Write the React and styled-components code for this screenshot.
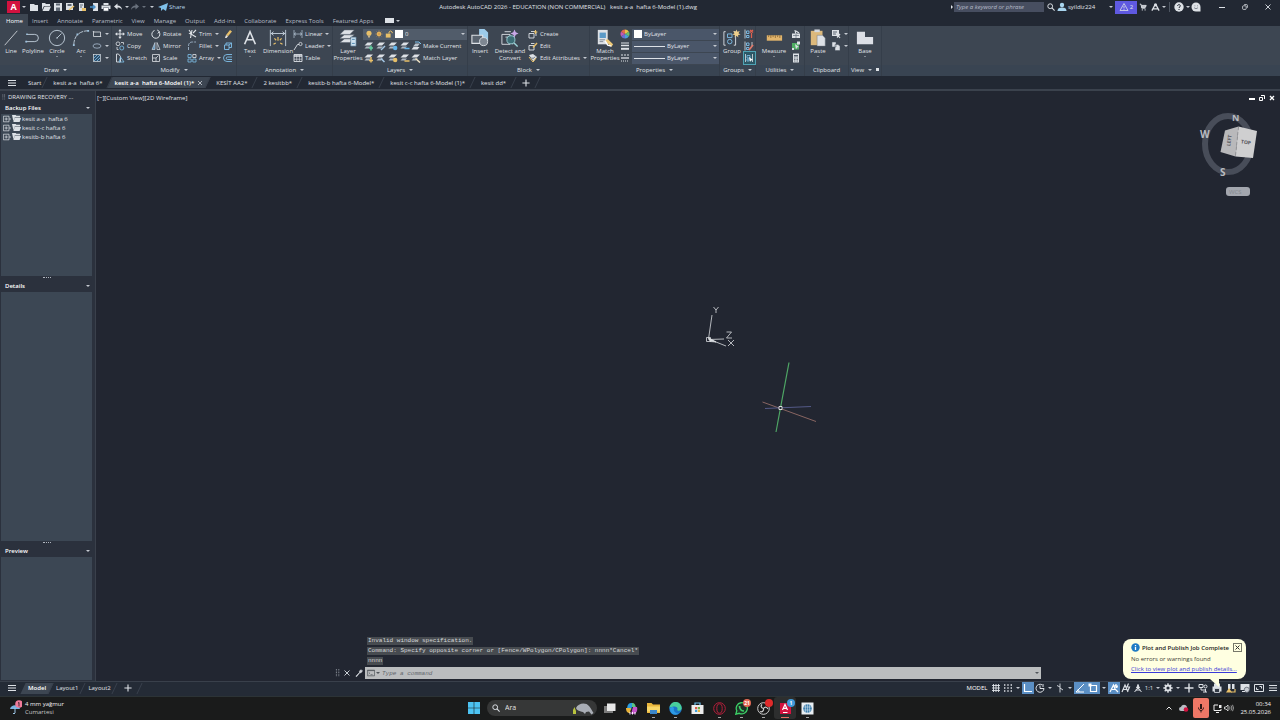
import React from "react";
import styled, { createGlobalStyle } from "styled-components";

const colors = {
  frame: "#222833",
  ribbon: "#3d4652",
  ribbonTitle: "#394452",
  canvas: "#222631",
  palette: "#3c4754",
  paletteHead: "#2b313d",
  line: "#3b424d",
  text: "#e0e4e9",
  dim: "#b9bfc8",
  accent: "#5b8fc4"
};

const GlobalStyle = createGlobalStyle`
  * { box-sizing: border-box; }
  body {
    margin: 0;
    background: ${colors.canvas};
    color: ${colors.text};
    font: 6px/8px "Open Sans", "Noto Sans", sans-serif;
  }
  button, input, select {
    font: inherit;
    color: inherit;
    background: none;
    border: 0;
    padding: 0;
    margin: 0;
  }
  a { color: inherit; text-decoration: none; }
  ul { list-style: none; margin: 0; padding: 0; }
  svg { display: block; flex: none; }
`;

/* ---------- icons ---------- */

const W = "#dde1e6";
const B = "#7fc0ea";
const Y = "#e8c069";

// two sheets of a layer stack with a coloured mark over the lower right corner
const stack = (mark, shape) => (
  <>
    <path d="M.5 4.500L3.500 1.500H9L6 4.500z" fill={W} />
    <path d="M.5 7.500l1.800-2H7L5 7.500z" fill="#aeb6bf" />
    {shape ? (
      <path d={shape} stroke={mark} strokeWidth="1.500" fill="none" />
    ) : (
      <circle cx="7.200" cy="7" r="2.200" fill={mark} />
    )}
  </>
);

const small = {
  launch: <path d="M0 0h10v10H0z" fill={W} />,
  newFile: <path d="M1 2h4l1 1h3v6H1z" fill={W} />,
  open: <path d="M1 1h3l1 1h4v2H3L1 8zM3.500 4.500H10L8 9H1.500z" fill={W} />,
  save: (
    <>
      <path d="M1 1h8v8H1z" fill={W} />
      <path d="M3 1.500h4v2H3zM3 5.500h4V9H3z" fill="#5f6874" />
    </>
  ),
  saveAs: (
    <>
      <path d="M1 1h7v7H1z" fill={W} />
      <path d="M2.500 2h4v2h-4z" fill="#5f6874" />
      <path d="M4 8l5-4" stroke={Y} strokeWidth="1.600" />
    </>
  ),
  exportFile: (
    <>
      <path d="M2 1h5v8H2z" fill={W} />
      <path d="M5 6h4v3H5z" fill={Y} />
      <path d="M3 3h3M3 5h2" stroke="#5f6874" />
    </>
  ),
  mobile: (
    <>
      <path d="M4 1h5v8H4z" fill={W} />
      <path d="M1 5h5M4 3l2 2-2 2" stroke="#4a90c8" strokeWidth="1.400" fill="none" />
    </>
  ),
  print: (
    <>
      <path d="M2.500 1h5v2h-5zM.5 3.500h9V7h-9z" fill={W} />
      <path d="M2.500 5.500h5V9h-5z" fill="#fff" stroke="#59626e" strokeWidth=".6" />
    </>
  ),
  undo: <path d="M1 4.500L4.500 1.500v2C7 3.500 9 5 9 8 8 6 6.500 5.500 4.500 5.500v2z" fill={W} />,
  redo: <path d="M9 4.500L5.500 1.500v2C3 3.500 1 5 1 8c1-2 2.500-2.500 4.500-2.500v2z" fill="#69717d" />,
  plane: <path d="M0 5l10-4-2 8-3-2-2 2V6z" fill={B} />,
  search: (
    <>
      <circle cx="4" cy="4" r="3" fill="none" stroke={W} strokeWidth="1.200" />
      <path d="M6.200 6.200L9.500 9.500" stroke={W} strokeWidth="1.400" />
    </>
  ),
  user: (
    <>
      <circle cx="5" cy="3" r="2.200" fill="#a9d5ef" />
      <path d="M.5 9c0-3 2.500-3.500 4.500-3.500S9.500 6 9.500 9z" fill="#a9d5ef" />
    </>
  ),
  warn: <path d="M5 1.500l4 7H1zM5 4v2.400M5 7v.8" fill="none" stroke={W} strokeWidth=".8" />,
  cart: (
    <>
      <path d="M1 1.500h1.500l1 5H8M3 3h6L8 5.500H3.500M3.500 4.200h5" fill="none" stroke={W} strokeWidth="1.200" />
      <path d="M3.500 8.500h1.200M7 8.500h1.200" stroke={W} strokeWidth="1.500" />
    </>
  ),
  autodesk: (
    <>
      <path d="M5 1l4 7.500M5 1L1 8.500M2.500 6.500h5" fill="none" stroke={W} strokeWidth="1.400" />
      <circle cx="5" cy="2.200" r="1.600" fill={W} />
    </>
  ),
  help: (
    <>
      <circle cx="5" cy="5" r="4.700" fill={W} />
      <path d="M3.600 4c0-2 3-1.700 2.700 0C6.200 5 5 4.900 5 6M5 7v1" fill="none" stroke={colors.frame} />
    </>
  ),
  chat: (
    <>
      <path d="M5 .5a4.400 4.400 0 1 0 0 9h4.500V5A4.500 4.500 0 0 0 5 .5z" fill={W} />
      <path d="M3 5.500c1 1.500 3 1.500 4 0M3.500 3.800h.8M6 3.800h.8" fill="none" stroke="#6d7580" strokeWidth=".8" />
    </>
  ),
  minus: <path d="M2 5.500h6" stroke={W} />,
  restore: (
    <>
      <rect x="2" y="3.500" width="4.500" height="4.500" rx="1" fill="none" stroke={W} />
      <path d="M4 2h3q1 0 1 1v3" fill="none" stroke={W} />
    </>
  ),
  close: <path d="M2.500 2.500l5 5M7.500 2.500l-5 5" stroke={W} strokeWidth=".9" />,
  menu: <path d="M1 2.500h8M1 5h8M1 7.500h8" stroke={W} strokeWidth="1.200" />,
  plus: <path d="M5 .5v9M.5 5h9" stroke={W} strokeWidth="1.400" />,

  rect: <path d="M1.500 3h7v4.500h-7zM.8 2.500h1.400M7.800 7.500h1.400" fill="none" stroke={W} strokeWidth=".8" />,
  ellipse: <ellipse cx="5" cy="5" rx="4" ry="2.200" fill="none" stroke="#a9bbcf" strokeWidth=".8" />,
  hatch: (
    <>
      <rect x="1.500" y="1.500" width="7" height="7" fill="#2f4e6b" stroke={W} strokeWidth=".7" />
      <path d="M2 8l6-6M2 5l3-3M5 8l3-3" stroke={B} strokeWidth=".8" />
    </>
  ),
  move: (
    <>
      <path d="M5 1v8M1 5h8" stroke={W} />
      <path d="M5 0l1.700 2.200H3.300zM5 10L3.300 7.800h3.400zM0 5l2.200-1.700v3.400zM10 5L7.800 6.700V3.300z" fill={W} />
    </>
  ),
  copy: (
    <>
      <circle cx="3" cy="2.800" r="1.900" fill="none" stroke={W} strokeWidth=".8" />
      <circle cx="6.800" cy="7" r="2" fill="none" stroke={B} strokeWidth=".8" />
      <path d="M2 6v2.500h1.500M6 1.500h2.500v2" fill="none" stroke={W} strokeWidth=".8" />
    </>
  ),
  stretch: (
    <>
      <path d="M1.500 1v8h4V3.500L3.500 1z" fill="none" stroke={W} strokeWidth=".9" />
      <path d="M4 9h5L5.500 4z" fill="none" stroke={B} strokeWidth=".8" />
    </>
  ),
  rotate: <path d="M3.500 1.500A4 4 0 1 0 8 2.800M6.200 1l2.200 1.500L6.800 4.500" fill="none" stroke={W} />,
  mirror: (
    <>
      <path d="M4 1.500V8.500H1z" fill="#5a8fb9" stroke={W} strokeWidth=".6" />
      <path d="M6 1.500V8.500h3z" fill="none" stroke={W} strokeWidth=".7" />
    </>
  ),
  scale: <path d="M1.500 1.500h7v7h-7zM1.500 5h3.500v3.500M5 5l2.500-2.500" fill="none" stroke={W} strokeWidth=".8" />,
  trim: (
    <>
      <path d="M2 1l3.500 5M5 1L3.500 9M6 4l3-3M5.500 6L9 8" stroke={W} strokeWidth="1.100" fill="none" />
      <path d="M1.500 4.500l3-1.500v3z" fill={W} />
    </>
  ),
  fillet: <path d="M1.500 9V5q0-4 4-4H9" fill="none" stroke="#9fb4c9" strokeWidth=".9" strokeDasharray="3 1" />,
  array: (
    <>
      <path d="M1 1.500h3.200v3H1zM1 6h3.200v3H1zM5.800 6H9v3H5.800z" fill="none" stroke={B} strokeWidth=".8" />
      <path d="M5.800 1.500H9v3H5.800z" fill="none" stroke={W} strokeWidth=".8" />
    </>
  ),
  erase: (
    <>
      <path d="M3 6l4-5 2 1.500-4 4.800z" fill={Y} />
      <path d="M3 6l2 1.300L3.500 9H2z" fill="#e9e5de" />
    </>
  ),
  explode: <path d="M1.500 4h4.500v4.500H1.500zM3 4V2h5.500v4.500H6M6 4l2.500-2" fill="none" stroke={B} strokeWidth=".9" />,
  offset: <path d="M9 1.500H4a3.300 3.300 0 0 0 0 7h5M9 4H4.500a1.200 1.200 0 0 0 0 2.500H9" fill="none" stroke={B} strokeWidth=".9" />,
  linear: <path d="M1 1v8M9 1v8M1 5h8M3 3.500L1.300 5 3 6.500M7 3.500L8.700 5 7 6.500" fill="none" stroke="#b9c9d8" strokeWidth=".7" />,
  leader: (
    <>
      <path d="M1 9l3.500-5.500H6" fill="none" stroke={W} strokeWidth=".9" />
      <circle cx="7.500" cy="3" r="1.600" fill="none" stroke={W} strokeWidth=".8" />
    </>
  ),
  table: (
    <>
      <path d="M1 1.500h8v7H1z" fill="none" stroke={W} strokeWidth=".9" />
      <path d="M1 3h8" stroke={W} strokeWidth="1.500" />
      <path d="M1 6.200h8M3.700 2v6M6.400 2v6" stroke={W} strokeWidth=".6" />
    </>
  ),
  bulb: (
    <>
      <circle cx="5" cy="4" r="3.200" fill={Y} />
      <path d="M3.800 7h2.400v2.500H3.800z" fill="#c9b68c" />
    </>
  ),
  sun: (
    <>
      <circle cx="5" cy="5" r="2.800" fill={Y} />
      <path d="M5 .5v9M.5 5h9M2 2l6 6M8 2L2 8" stroke="#d69a4c" strokeWidth=".8" />
    </>
  ),
  lock: (
    <>
      <path d="M5 4.500V2.500q2-2.500 4 0V4" fill="none" stroke={Y} strokeWidth="1.200" />
      <path d="M1 4.500h6v5H1z" fill={Y} />
    </>
  ),
  layOff: stack("#62d0a0", "M7 4.500v5M5 7h4"),
  layIso: stack("#a4c7e5", "M5 9l4-4"),
  layFreeze: stack("#63b4ea"),
  layLock: stack("#63b4ea", "M4.500 7.500h5"),
  layCurrent: (
    <>
      <path d="M.5 8.500l2-2.500h6l-2 2.500z" fill={W} />
      <path d="M2 5.500L4.500 2.500H9L6.500 5.500z" fill="#b9c2cb" />
      <path d="M4 1h4l2 2" stroke={B} fill="none" />
    </>
  ),
  layOn: stack("#e8c069", "M7 4v5.500M5 7.500h4"),
  layUniso: stack("#a4c7e5", "M5 5.500L8.500 9"),
  layThaw: stack("#e8c069"),
  layUnlock: stack("#e8c069", "M4.500 8h5"),
  layMatch: stack("#efe3c4", "M4.500 5.500l4.500 4"),
  create: (
    <>
      <path d="M1 4.500h5v4.500H1zM3 2.500h5v4.500" fill="none" stroke={W} strokeWidth=".9" />
      <path d="M7.500 1v4M5.800 3h3.600" stroke={Y} strokeWidth="1.100" />
    </>
  ),
  edit: (
    <>
      <path d="M1 4.500h5v4.500H1zM3 2.500h3.500" fill="none" stroke={W} strokeWidth=".9" />
      <path d="M5 6.500L9 2" stroke={Y} strokeWidth="1.500" />
    </>
  ),
  editAttr: (
    <>
      <path d="M1 2l4-1 4 3-3.500 4.500z" fill={W} />
      <path d="M1 4l4 5 3-4" stroke={Y} fill="none" />
      <path d="M4 4.500l1 1.200 2-2" stroke="#444d59" fill="none" strokeWidth=".8" />
    </>
  ),
  wheel: (
    <>
      <path d="M5 5V.5A4.500 4.500 0 0 1 8.900 2.800z" fill="#e9c34b" />
      <path d="M5 5l3.900-2.200a4.500 4.500 0 0 1 0 4.400z" fill="#6abf69" />
      <path d="M5 5l3.900 2.200A4.500 4.500 0 0 1 5 9.500z" fill="#4aa3d8" />
      <path d="M5 5v4.500A4.500 4.500 0 0 1 1.100 7.200z" fill="#6b6fd0" />
      <path d="M5 5L1.100 7.200a4.500 4.500 0 0 1 0-4.400z" fill="#c45ab3" />
      <path d="M5 5L1.100 2.800A4.500 4.500 0 0 1 5 .5z" fill="#e2694f" />
    </>
  ),
  weight: (
    <>
      <path d="M1 2h8" stroke={W} />
      <path d="M1 4.500h8" stroke={W} strokeWidth="1.500" />
      <path d="M1 7.800h8" stroke={W} strokeWidth="2" />
    </>
  ),
  ltype: (
    <>
      <path d="M1 2h8" stroke={W} strokeDasharray="2 1" />
      <path d="M1 5h8" stroke={W} strokeWidth="1.300" />
      <path d="M1 8h8" stroke={W} strokeDasharray="1 1" />
    </>
  ),
  ungroup: (
    <>
      <path d="M2.500 2h2.500v2.500H2.500zM2.500 6.500H5V8.500H2.500z" fill="none" stroke={B} strokeWidth=".9" />
      <path d="M1 .5v9" stroke={W} strokeWidth=".8" />
      <path d="M6 3.500l3-2.500M6 1l3 2.500M7.500 4v5" stroke="#e0604f" strokeWidth="1.200" />
    </>
  ),
  groupEdit: (
    <>
      <path d="M2.500 2h2.500v2.500H2.500zM2.500 6.500H5V8.500H2.500z" fill="none" stroke={B} strokeWidth=".9" />
      <path d="M1 .5v9M8 1v4" stroke={W} strokeWidth=".8" />
      <path d="M5 9l4-5" stroke="#e0796a" strokeWidth="1.700" />
    </>
  ),
  groupSel: (
    <>
      <path d="M3 2.500h3v2.500H3zM3 6h2v2H3z" fill="none" stroke={B} strokeWidth=".8" />
      <path d="M1.500 1v8M8.500 1v8" stroke={W} strokeWidth=".8" />
      <path d="M5 4l4 3-2 .4L6 9z" fill="#fff" />
    </>
  ),
  quickSel: (
    <>
      <path d="M1 4.500h8V9H1z" fill={W} />
      <path d="M4 1l1 5M5 2l3 2" stroke={W} strokeWidth="1.200" />
      <path d="M5 4.500V9M2 6.500h6" stroke="#66707c" strokeWidth=".7" />
    </>
  ),
  selAll: (
    <>
      <path d="M1 2h7v6.500H1z" fill="#4fae63" />
      <path d="M6 .5h3v3H6zM1 7h2v2H1z" fill={W} />
      <path d="M4 3l4 3-2 .5L5 8.500z" fill={W} />
    </>
  ),
  calc: (
    <>
      <path d="M2 .5h6v9H2z" fill={W} />
      <path d="M3 2h4v1.500H3z" fill="#555f6b" />
      <path d="M3 5h4M3 6.500h4M3 8h4" stroke="#555f6b" strokeWidth=".8" strokeDasharray="1 .5" />
    </>
  ),
  copyClip: (
    <>
      <path d="M1 1h7v6H1z" fill={W} />
      <path d="M2 3h4M2 5h3" stroke="#59636f" />
      <path d="M5 4l4 5M9 5L6 8.500" stroke={W} strokeWidth="1.200" />
    </>
  ),
  pages: <path d="M1 1h4v5H1zM4 3.500h3L9 5v4.500H4z" fill={W} stroke="#4b5561" strokeWidth=".5" />,
  folder: <path d="M0 1h4l1 1h4v2H3L1.500 8zM3 4.500h7L8.500 9H1.500z" fill={W} />,
  expand: <path d="M.5 1.500h7v7h-7zM2 5h4M4 3v4M7.500 5H10" fill="none" stroke={W} strokeWidth=".9" />,
  wrench: <path d="M1 9l4.500-4.500C5 2.500 6.500.8 8.500 1.200L7 2.700 7.500 3.200 9 1.700c.5 2-1.300 3.500-3 3.100L2 9.600z" fill={W} stroke={W} strokeWidth=".6" />,
  grip: <path d="M3 0v10M6 0v10" stroke="#b4bac3" strokeDasharray="1 1" />,
  prompt: (
    <>
      <path d="M.5 1.500h9v7h-9z" fill="none" stroke="#50555b" strokeWidth=".9" />
      <path d="M.5 2h9" stroke="#50555b" />
      <path d="M2 4l1.500 1.200L2 6.500M4.500 7H7" fill="none" stroke="#50555b" strokeWidth=".8" />
    </>
  ),

  grid: <path d="M2.500 1v8M5 1v8M7.500 1v8M1 2.500h8M1 5h8M1 7.500h8" stroke={W} strokeWidth=".9" />,
  snap: <path d="M1 2h8M1 5h8M1 8h8" stroke={W} strokeWidth="1.400" strokeDasharray="1.400 1.900" />,
  ortho: <path d="M1.500 1v7.500H9" fill="none" stroke="#fff" strokeWidth="1.200" />,
  polar: (
    <>
      <path d="M7 1.800A4 4 0 1 0 9 5.500H5V2.500" fill="none" stroke={W} />
      <path d="M8 1v3" stroke={W} />
    </>
  ),
  iso: <path d="M5 .5v9M5 5l3 2M5 4L2 2.500" stroke={W} strokeWidth=".9" />,
  track: <path d="M1 9L9 1M1 9h8M4 9a3 3 0 0 0-1-2.500" fill="none" stroke="#fff" />,
  osnap: (
    <>
      <path d="M2.500 2.500h6v6h-6z" fill="none" stroke="#fff" strokeWidth="1.200" />
      <path d="M.5.5h3v3h-3z" fill="#fff" />
    </>
  ),
  annoOn: <path d="M1 9l3.500-7L6 6l3 3M3 6.500h3M7 1v4M5 3h4M6 2l2.500 2.500" fill="none" stroke="#fff" strokeWidth="1.200" />,
  annoAuto: <path d="M1 9l3-7 3 7M2.500 6.500h3M7.500.5L6 4h2.500L7 7.500" fill="none" stroke={W} strokeWidth="1.200" />,
  annoScale: <path d="M5 1v4M5 5L1.500 9M5 5l3.500 4M2.500 7h5M5 2l1.500 3h-3z" fill={W} stroke={W} />,
  gear: (
    <>
      <circle cx="5" cy="5" r="2.500" fill="none" stroke={W} strokeWidth="1.800" />
      <path d="M5 .3v2M5 7.700v2M.3 5h2M7.700 5h2M1.700 1.700l1.300 1.300M7 7l1.300 1.300M8.300 1.700L7 3M3 7L1.700 8.300" stroke={W} strokeWidth="1.400" />
    </>
  ),
  isolate: (
    <>
      <path d="M1 1.500h4v3H1z" fill="none" stroke={W} />
      <circle cx="7.500" cy="3.500" r="1.500" fill="none" stroke={W} />
      <path d="M3 5v2h4M7.500 6v3M5 9h4" fill="none" stroke={W} />
    </>
  ),
  plotter: (
    <>
      <path d="M2 .5h6v3H2zM.5 3.500h9v5h-9z" fill={W} />
      <path d="M2.500 5.500h5V9.500h-5z" fill="#333a45" stroke={W} strokeWidth=".8" />
    </>
  ),
  perf: (
    <>
      <path d="M2 1v5h2.500V1zM6 1v5h2.500V1z" fill={W} />
      <path d="M0 9.500L3 5l3 4.500z" fill={Y} />
      <path d="M5 9h4V6" stroke={Y} fill="none" strokeWidth="1.200" />
    </>
  ),
  hardware: (
    <>
      <path d="M.5 1h9v6h-9z" fill={W} />
      <circle cx="6.800" cy="6.800" r="2.600" fill="#c9ced5" stroke="#3b424d" strokeWidth=".6" />
      <path d="M2 8.500h3" stroke={W} />
    </>
  ),
  clean: <path d="M.5 1.500h9v7h-9zM5.500 3.500h2v2M2.500 4.500v2h2" fill="none" stroke={W} />
};

const large = {
  line: <path d="M3 18L17 2" stroke={W} strokeWidth=".9" />,
  polyline: (
    <>
      <path d="M3 6h9a3.800 3.800 0 0 1 0 8H2" fill="none" stroke="#c3d0dd" />
      <path d="M1.500 13h2v2h-2zM2.500 5h1.600v1.600H2.500z" fill="#9ec3e0" />
    </>
  ),
  circle: (
    <>
      <circle cx="10" cy="10" r="8.500" fill="none" stroke="#c3d0dd" />
      <path d="M10 10l5-5M9 10h2" stroke="#c3d0dd" />
    </>
  ),
  arc: (
    <>
      <path d="M2 18C2 8 8 2 18 2" fill="none" stroke="#c3d0dd" strokeDasharray="6 1" />
      <path d="M1 17h2v2H1zM5 5h2v2H5zM17 1h2v2h-2z" fill="#9ec3e0" />
    </>
  ),
  text: <path d="M4 17L10 3l6 14M6.200 12h7.600" fill="none" stroke={W} strokeWidth="1.800" />,
  dimension: (
    <>
      <path d="M1.500 1v18M18.500 1v18M2 5h16M5 3L2.500 5 5 7M15 3l2.500 2L15 7" fill="none" stroke="#c6d2de" />
      <path d="M5 17l2.500-1.500M15 17l-2.500-1.500M10 9v4M6 10.500l2 2M14 10.500l-2 2" stroke={Y} strokeWidth="1.300" />
    </>
  ),
  layers: (
    <>
      <path d="M1 6l5-5h11l-5 5zM1 10.500l5-4h11l-5 4zM1 15l5-4h11l-5 4z" fill={W} stroke="#59636f" strokeWidth=".6" />
      <path d="M13 9h6v10h-6z" fill="#cfe2f0" stroke="#4b6f8c" strokeWidth=".7" />
      <path d="M14.500 11.500h3M14.500 16h3" stroke="#3f7eaa" />
    </>
  ),
  insert: (
    <>
      <path d="M9 0h6l4 4v9H9z" fill="#9ccbea" />
      <path d="M1 7h12v9H1z" fill="#59636f" stroke={W} strokeWidth="1.200" />
      <circle cx="14" cy="14" r="4.500" fill="#7e8792" stroke={W} />
    </>
  ),
  detect: (
    <>
      <path d="M1 6h9v11H1zM4 3h7M5 9h8v8" fill="none" stroke={W} />
      <circle cx="11" cy="12" r="4.500" fill="#3d6d76" stroke="#9cd3d8" />
      <path d="M14.500 15.500l4 4" stroke="#9cd3d8" strokeWidth="1.500" />
      <path d="M15 .5l1.400 3.100L19.500 5l-3.100 1.400L15 9.500l-1.400-3.100L10.500 5l3.100-1.400z" fill="#c9a8e8" />
    </>
  ),
  match: (
    <>
      <path d="M2 1h11v16H2z" fill={W} />
      <path d="M4 4h7v6H4z" fill="#5a9ac8" />
      <path d="M4 12h6M4 14h4" stroke="#7d8691" />
      <path d="M10 13l3-2 6 6-2 3z" fill="#edc978" />
      <path d="M10 13l3 5 4 1" stroke="#fff" strokeWidth="1.500" fill="none" />
    </>
  ),
  group: (
    <>
      <path d="M3 3H1v15h2M12 3h2v15h-2" fill="none" stroke={W} />
      <path d="M5 5.500h5v4H5z" fill="none" stroke={B} />
      <circle cx="7.500" cy="14" r="2.500" fill="none" stroke={B} />
      <path d="M15 .5l1 2.600 2.600-.8-1.400 2.400 2.300 1.500-2.700.4.200 2.800-2-2-2 2 .2-2.800-2.700-.4 2.300-1.500-1.400-2.400 2.600.8z" fill="#efcf8b" />
    </>
  ),
  measure: (
    <>
      <path d="M2 7h17v6H2z" fill="#e2b56c" />
      <path d="M4 7v2M6.500 7v3M9 7v2M11.500 7v3M14 7v2M16.500 7v3" stroke="#7a5b2b" strokeWidth=".8" />
    </>
  ),
  paste: (
    <>
      <path d="M2 2h13v16H2z" fill="#dcb97c" />
      <path d="M6 .5h6v3H6z" fill="#d3d8de" />
      <path d="M9 7h6l3 3v9H9z" fill={W} stroke="#6a737e" strokeWidth=".5" />
    </>
  ),
  base: <path d="M1 3h9v6h9v8H1z" fill="#dcdfe6" />
};

const Glyph = styled.svg.attrs({ viewBox: "0 0 10 10", "aria-hidden": true })`
  width: ${p => p.$size || 10}px;
  height: ${p => p.$size || 10}px;
`;

const Icon = ({ name, size }) => <Glyph $size={size}>{small[name]}</Glyph>;

const Caret = styled.i`
  flex: none;
  border: 2px solid transparent;
  border-top-color: ${p => p.$color || "#c5cad1"};
  border-bottom-width: 0;
`;

/* ---------- title bar ---------- */

const Page = styled.div`
  min-height: 100vh;
  display: flex;
  flex-direction: column;
  background: ${colors.frame};
`;

const TitleBar = styled.header`
  display: flex;
  align-items: center;
  height: 14px;
`;

const AppButton = styled.button`
  display: flex;
  align-items: center;
  gap: 2px;
  margin-left: 7px;
  margin-right: 2px;
`;

const AppLogo = styled.b`
  width: 13px;
  height: 12px;
  background: #d3123f;
  color: #fff;
  font-size: 9px;
  line-height: 12px;
  text-align: center;
`;

const Slot = styled.button`
  display: flex;
  flex: none;
  align-items: center;
  justify-content: center;
  width: ${p => p.$w || 12}px;
  height: ${p => p.$h || 12}px;
  background: ${p => (p.$active ? colors.accent : "none")};
`;

const ShareButton = styled.button`
  display: flex;
  align-items: center;
  gap: 1px;
  color: #b5d6ea;
`;

const WindowTitle = styled.h1`
  flex: 1;
  margin: 0;
  font-size: 6px;
  font-weight: 400;
  text-align: center;
  white-space: pre;
`;

const Keyword = styled.input`
  width: 90px;
  height: 10px;
  margin: 0 1px;
  padding: 0 2px;
  background: #474e60;
  font-style: italic;
  &::placeholder { color: #b7bcc8; opacity: 1; }
`;

const SideCaret = styled.i`
  border: 2px solid transparent;
  border-left-color: ${colors.text};
  border-right-width: 0;
`;

const UserButton = styled.button`
  display: flex;
  align-items: center;
  gap: 1px;
  width: 52px;
`;

const Alerts = styled.button`
  display: flex;
  align-items: center;
  justify-content: center;
  gap: 1px;
  width: 22px;
  height: 13px;
  margin-left: 2px;
  background: #5f59e0;
`;

const Divider = styled.i`
  width: 1px;
  height: 10px;
  margin: 0 3px;
  background: #4d5561;
`;

const TopBar = () => (
  <TitleBar>
    <AppButton aria-label="Application menu">
      <AppLogo>A</AppLogo>
      <Caret />
    </AppButton>
    {["newFile", "open", "save", "saveAs", "exportFile", "mobile", "print", "undo"].map(n => (
      <Slot key={n} aria-label={n}>
        <Icon name={n} />
      </Slot>
    ))}
    <Slot $w={5} aria-label="Undo list"><Caret /></Slot>
    <Slot aria-label="redo"><Icon name="redo" /></Slot>
    <Slot $w={5} aria-label="Redo list"><Caret $color="#69717d" /></Slot>
    <Slot aria-label="Customize"><Caret /></Slot>
    <ShareButton>
      <Icon name="plane" />
      Share
    </ShareButton>
    <WindowTitle>{"Autodesk AutoCAD 2026 - EDUCATION (NON COMMERCIAL)   kesit a-a  hafta 6-Model (1).dwg"}</WindowTitle>
    <SideCaret />
    <Keyword placeholder="Type a keyword or phrase" aria-label="Search help" />
    <Slot aria-label="Search"><Icon name="search" size={8} /></Slot>
    <UserButton>
      <Icon name="user" />
      syildiz224
    </UserButton>
    <Caret />
    <Alerts>
      <Icon name="warn" />
      2
    </Alerts>
    <Slot aria-label="Store"><Icon name="cart" size={8} /></Slot>
    <Slot aria-label="Autodesk"><Icon name="autodesk" size={9} /></Slot>
    <Slot $w={5} aria-label="Autodesk apps"><Caret /></Slot>
    <Divider />
    <Slot aria-label="Help"><Icon name="help" size={10} /></Slot>
    <Slot $w={5} aria-label="Help list"><Caret /></Slot>
    <Slot aria-label="Feedback"><Icon name="chat" size={10} /></Slot>
    <Slot as="span" $w={8} />
    <Slot $w={24} aria-label="Minimize"><Icon name="minus" /></Slot>
    <Slot $w={22} aria-label="Restore"><Icon name="restore" size={8} /></Slot>
    <Slot $w={24} aria-label="Close"><Icon name="close" /></Slot>
  </TitleBar>
);

/* ---------- ribbon ---------- */

const MenuRow = styled.nav`
  display: flex;
  align-items: center;
  height: 12px;
`;

const MenuTab = styled.button`
  height: 12px;
  padding: 1px 5px 0 4px;
  color: ${p => (p.$active ? "#fff" : colors.dim)};
  background: ${p => (p.$active ? colors.ribbon : "none")};
  &:first-child { padding: 1px 5px 0 6px; }
`;

const MenuBox = styled.button`
  display: flex;
  align-items: center;
  gap: 2px;
  margin-left: 7px;
  padding-top: 1px;
  &::before {
    content: "";
    width: 9px;
    height: 5px;
    background: ${W};
  }
`;

const RibbonBar = styled.section`
  display: flex;
  height: 50px;
  background: ${colors.ribbon};
`;

const Panel = styled.div`
  display: flex;
  flex-direction: column;
  width: ${p => p.$w}px;
  border-right: 1px solid #353e4a;
`;

const PanelBody = styled.div`
  display: flex;
  flex: 1;
  padding: 2px 0 0 ${p => p.$pad || 0}px;
`;

const PanelTitle = styled.div`
  display: flex;
  align-items: center;
  justify-content: center;
  gap: 4px;
  height: 11px;
  padding-bottom: 2px;
  background: ${colors.ribbonTitle};
`;

const Filler = styled.div`
  flex: 1;
  background: linear-gradient(${colors.ribbon} 39px, ${colors.ribbonTitle} 39px);
`;

const BigButton = styled.button`
  display: flex;
  flex-direction: column;
  align-items: center;
  width: ${p => p.$w}px;
  line-height: 7px;
  text-align: center;
  white-space: pre;
  svg { width: 18px; height: 20px; }
  i { margin-top: 1px; border-width: 1px; border-bottom-width: 0; }
`;

const Column = styled.div`
  display: flex;
  flex-direction: column;
  flex: ${p => (p.$w ? "none" : 1)};
  width: ${p => (p.$w ? `${p.$w}px` : "auto")};
`;

const Line = styled.div`
  display: flex;
  align-items: center;
  height: 12px;
`;

const Tool = styled.button`
  display: flex;
  align-items: center;
  gap: 2px;
  height: 12px;
  white-space: nowrap;
  outline: ${p => (p.$active ? "1px solid #4fa3b5" : "none")};
  background: ${p => (p.$active ? "#2d5866" : "none")};
  i { margin-left: 1px; }
`;

const Combo = styled.label`
  display: flex;
  align-items: center;
  gap: 2px;
  flex: 1;
  height: 11px;
  padding: 0 2px;
  background: ${p => (p.$dark ? "#515c6a" : "#4a5669")};
  select {
    appearance: none;
    flex: 1;
    min-width: 0;
    height: 11px;
    outline: none;
  }
`;

const Swatch = styled.i`
  width: 8px;
  height: 8px;
  background: #fff;
`;

const Stroke = styled.i`
  width: 31px;
  height: 1px;
  background: ${W};
`;

const Big = ({ icon, label, w, menu }) => (
  <BigButton $w={w}>
    <svg viewBox="0 0 20 20" aria-hidden="true">{large[icon]}</svg>
    {label}
    {menu && <Caret />}
  </BigButton>
);

const Tools = ({ items, w }) => (
  <Column $w={w}>
    {items.map(([icon, label, menu, active]) => (
      <Tool key={icon} $active={active} aria-label={label || icon}>
        <Icon name={icon} />
        {label}
        {menu && <Caret />}
      </Tool>
    ))}
  </Column>
);

const Group = ({ title, w, pad, plain, launcher, children }) => (
  <Panel $w={w}>
    <PanelBody $pad={pad}>{children}</PanelBody>
    <PanelTitle>
      {title}
      {!plain && <Caret />}
      {launcher && <Icon name="launch" size={3} />}
    </PanelTitle>
  </Panel>
);

const PropertyCombo = ({ icon, name, children }) => (
  <Line>
    <Icon name={icon} />
    <Slot as="span" $w={2} />
    <Combo>
      {children}
      <select aria-label={name}>
        <option>ByLayer</option>
      </select>
      <Caret />
    </Combo>
  </Line>
);

const menus = [
  "Home", "Insert", "Annotate", "Parametric", "View", "Manage", "Output",
  "Add-ins", "Collaborate", "Express Tools", "Featured Apps"
];

const Ribbon = () => (
  <>
    <MenuRow>
      {menus.map((m, i) => (
        <MenuTab key={m} $active={i === 0}>{m}</MenuTab>
      ))}
      <MenuBox aria-label="Ribbon display"><Caret /></MenuBox>
    </MenuRow>
    <RibbonBar>
      <Group title="Draw" w={112}>
        <Big icon="line" label="Line" w={22} />
        <Big icon="polyline" label="Polyline" w={22} />
        <Big icon="circle" label="Circle" w={26} menu />
        <Big icon="arc" label="Arc" w={22} menu />
        <Tools items={[["rect", "", true], ["ellipse", "", true], ["hatch", "", true]]} />
      </Group>
      <Group title="Modify" w={125} pad={3}>
        <Tools w={36} items={[["move", "Move"], ["copy", "Copy"], ["stretch", "Stretch"]]} />
        <Tools w={36} items={[["rotate", "Rotate"], ["mirror", "Mirror"], ["scale", "Scale"]]} />
        <Tools w={36} items={[["trim", "Trim", true], ["fillet", "Fillet", true], ["array", "Array", true]]} />
        <Tools items={[["erase"], ["explode"], ["offset"]]} />
      </Group>
      <Group title="Annotation" w={96}>
        <Big icon="text" label="Text" w={26} menu />
        <Big icon="dimension" label="Dimension" w={30} />
        <Tools items={[["linear", "Linear", true], ["leader", "Leader", true], ["table", "Table"]]} />
      </Group>
      <Group title="Layers" w={135}>
        <Big icon="layers" label={"Layer\nProperties"} w={30} />
        <Column>
          <Line>
            <Combo $dark>
              <Icon name="bulb" size={8} />
              <Icon name="sun" size={8} />
              <Icon name="lock" size={8} />
              <Swatch />
              <select aria-label="Layer">
                <option>0</option>
              </select>
              <Caret />
            </Combo>
          </Line>
          <Line>
            {["layOff", "layIso", "layFreeze", "layLock"].map(n => (
              <Slot key={n} aria-label={n}><Icon name={n} /></Slot>
            ))}
            <Tool><Icon name="layCurrent" />Make Current</Tool>
          </Line>
          <Line>
            {["layOn", "layUniso", "layThaw", "layUnlock"].map(n => (
              <Slot key={n} aria-label={n}><Icon name={n} /></Slot>
            ))}
            <Tool><Icon name="layMatch" />Match Layer</Tool>
          </Line>
        </Column>
      </Group>
      <Group title="Block" w={122}>
        <Big icon="insert" label="Insert" w={24} menu />
        <Big icon="detect" label={"Detect and\nConvert"} w={36} />
        <Tools items={[["create", "Create"], ["edit", "Edit"], ["editAttr", "Edit Attributes", true]]} />
      </Group>
      <Group title="Properties" w={130}>
        <Big icon="match" label={"Match\nProperties"} w={30} />
        <Column>
          <PropertyCombo icon="wheel" name="Color"><Swatch /></PropertyCombo>
          <PropertyCombo icon="weight" name="Lineweight"><Stroke /></PropertyCombo>
          <PropertyCombo icon="ltype" name="Linetype"><Stroke /></PropertyCombo>
        </Column>
      </Group>
      <Group title="Groups" w={36}>
        <Big icon="group" label="Group" w={24} />
        <Tools items={[["ungroup"], ["groupEdit"], ["groupSel", "", false, true]]} />
      </Group>
      <Group title="Utilities" w={49} pad={1}>
        <Big icon="measure" label="Measure" w={34} menu />
        <Tools items={[["quickSel"], ["selAll"], ["calc"]]} />
      </Group>
      <Group title="Clipboard" w={44} plain>
        <Big icon="paste" label="Paste" w={26} menu />
        <Tools items={[["copyClip", "", true], ["pages", "", true]]} />
      </Group>
      <Group title="View" w={33} launcher>
        <Big icon="base" label="Base" w={32} menu />
      </Group>
      <Filler />
    </RibbonBar>
  </>
);

/* ---------- document tabs ---------- */

const TabRow = styled.nav`
  display: flex;
  align-items: center;
  height: ${p => p.$h || 15}px;
  border-bottom: ${p => (p.$h ? "none" : `2px solid ${colors.line}`)};
`;

const DocTab = styled.button`
  display: flex;
  align-items: center;
  gap: 2px;
  height: 13px;
  padding: 0 ${p => p.$pad || 8}px;
  white-space: pre;
  position: relative;
  z-index: 0;
  font-weight: ${p => (p.$active ? 600 : 400)};
  color: ${p => (p.$active ? "#fff" : colors.text)};
  &::before {
    content: "";
    position: absolute;
    z-index: -1;
    inset: 1px 0;
    transform: skewX(-25deg);
    background: ${p => (p.$active ? colors.ribbon : "none")};
    border-right: 1px solid #39414d;
  }
`;

const docs = [
  "Start",
  "kesit a-a  hafta 6*",
  "kesit a-a  hafta 6-Model (1)*",
  "KESİT AA2*",
  "2 kesitbb*",
  "kesitb-b hafta 6-Model*",
  "kesit c-c hafta 6-Model (1)*",
  "kesit dd*"
];

const DocTabs = () => (
  <TabRow>
    <Slot $w={24} aria-label="File tab menu"><Icon name="menu" /></Slot>
    {docs.map((d, i) => (
      <DocTab key={d} $active={i === 2} $pad={i === 0 || i === 2 ? 4 : 8}>
        {d}
        {i === 2 && <Icon name="close" size={8} />}
      </DocTab>
    ))}
    <DocTab aria-label="New drawing"><Icon name="plus" size={8} /></DocTab>
  </TabRow>
);

/* ---------- recovery palette ---------- */

const Main = styled.main`
  display: flex;
  flex: 1;
`;

const Palette = styled.aside`
  display: flex;
  flex-direction: column;
  width: 96px;
  padding: 0 2px 1px 1px;
  border-right: 1px solid #3a404b;
  background: ${colors.paletteHead};
`;

const PaletteTitle = styled.div`
  display: flex;
  align-items: center;
  gap: 1px;
  height: 11px;
`;

const PaletteHead = styled.h2`
  display: flex;
  align-items: center;
  justify-content: space-between;
  height: 12px;
  margin: 0;
  padding: 0 3px 0 4px;
  font-size: 6px;
  font-weight: 600;
  color: #fff;
`;

const PaletteBody = styled.div`
  flex: ${p => p.$grow};
  background: ${colors.palette};
  margin-right: 1px;
`;

const Splitter = styled.div`
  height: 3px;
  border-top: 1px dotted #b0b6bf;
  margin: 1px 42px 0;
`;

const TreeRow = styled.li`
  display: flex;
  align-items: center;
  gap: 1px;
  height: 9px;
  padding-left: 2px;
  white-space: pre;
`;

const Recovery = () => (
  <Palette>
    <PaletteTitle><Icon name="grip" size={6} />DRAWING RECOVERY ...</PaletteTitle>
    <PaletteHead>Backup Files<Caret /></PaletteHead>
    <PaletteBody $grow={162}>
      <ul>
        {["kesit a-a  hafta 6", "kesit c-c hafta 6", "kesitb-b hafta 6"].map(f => (
          <TreeRow key={f}>
            <Icon name="expand" size={8} />
            <Icon name="folder" size={9} />
            {f}
          </TreeRow>
        ))}
      </ul>
    </PaletteBody>
    <Splitter />
    <PaletteHead>Details<Caret /></PaletteHead>
    <PaletteBody $grow={250} />
    <Splitter />
    <PaletteHead>Preview<Caret /></PaletteHead>
    <PaletteBody $grow={123} />
  </Palette>
);

/* ---------- drawing area ---------- */

const Canvas = styled.section`
  position: relative;
  flex: 1;
  background: ${colors.canvas};
`;

const ViewControls = styled.div`
  display: flex;
  align-items: center;
  justify-content: space-between;
  height: 14px;
  padding: 0 3px 0 1px;
  div { display: flex; }
`;

const Ucs = styled.svg`
  position: absolute;
  left: 606px;
  top: 212px;
`;

const CubeArea = styled.div`
  position: absolute;
  right: 18px;
  top: 18px;
  display: flex;
  flex-direction: column;
  align-items: center;
`;

const Wcs = styled.button`
  align-self: flex-end;
  width: 24px;
  height: 9px;
  margin: 8px 12px 0 0;
  border-radius: 3px;
  background: #a3a6ae;
  color: #85898f;
  text-align: left;
  padding-left: 3px;
  font-size: 6px;
  line-height: 8px;
`;

const CommandArea = styled.div`
  position: absolute;
  left: 50%;
  bottom: 2px;
  width: 706px;
  max-width: 100%;
  transform: translateX(-50%);
  font-family: "Liberation Mono", monospace;
`;

const History = styled.div`
  display: flex;
  flex-direction: column;
  align-items: flex-start;
  gap: 2px;
  margin: 0 0 2px 32px;
  span {
    padding: 0 1px;
    background: #474b50;
    color: #d5d7da;
  }
`;

const CommandRow = styled.div`
  display: flex;
  align-items: center;
`;

const CommandBox = styled.label`
  display: flex;
  align-items: center;
  gap: 1px;
  flex: 1;
  height: 12px;
  padding: 0 2px;
  background: #bbbdbf;
  input {
    flex: 1;
    height: 12px;
    padding-left: 1px;
    font-style: italic;
    outline: none;
    color: #333;
  }
  input::placeholder { color: #62666b; opacity: 1; }
`;

const Balloon = styled.aside`
  position: absolute;
  right: 34px;
  bottom: 2px;
  width: 123px;
  padding: 4px 4px 6px 8px;
  border-radius: 8px;
  background: #ffffe1;
  color: #3c3c34;
  svg.tail { position: absolute; right: 26px; top: 100%; }
`;

const BalloonHead = styled.div`
  display: flex;
  align-items: center;
  height: 9px;
  color: #222;
  b { flex: 1; padding-left: 2px; font-weight: 600; }
`;

const BalloonText = styled.p`
  margin: 3px 0 2px;
`;

const BalloonLink = styled.a`
  color: #3a3ad8;
  text-decoration: underline;
  white-space: nowrap;
`;

const BalloonClose = styled.button`
  width: 9px;
  height: 9px;
  border: 1px solid #77786a;
  svg { width: 7px; height: 7px; }
`;

const Drawing = () => (
  <Canvas>
    <ViewControls>
      <span>[−][Custom View][2D Wireframe]</span>
      <div>
        <Slot $w={11} aria-label="Minimize view">
          <svg width="6" height="6"><path d="M0 4h6" stroke="#fff" strokeWidth="2" /></svg>
        </Slot>
        <Slot $w={10} aria-label="Restore view">
          <svg width="6" height="6" viewBox="0 0 6 6">
            <path d="M.5 2.500h3v3h-3zM2 .5h3.500V4" fill="none" stroke="#fff" />
          </svg>
        </Slot>
        <Slot $w={10} aria-label="Close view">
          <svg width="6" height="6"><path d="M1 1l4 4M5 1L1 5" stroke="#fff" strokeWidth="1.300" /></svg>
        </Slot>
      </div>
    </ViewControls>

    <Ucs width="120" height="135" viewBox="702 303 120 135" fill="none">
      <g stroke="#d9dce0" strokeWidth=".8">
        <path d="M708.500 339L712 315M708.500 339l17.500 7M708.500 339.500L724 339" />
        <path d="M706.500 337.500h4v4h-4z" />
        <path d="M709 338l7 4-6-.5z" fill="#d9dce0" />
        <path d="M713.500 307l2.500 3 2.500-3M716 310v3M726.500 332h5l-5 6h5.500M728 340l6 6M734 340l-6 6" />
      </g>
      <path d="M789 362.500L776 432" stroke="#4fa866" strokeWidth="1.200" />
      <path d="M762.500 402L816 421.500" stroke="#a3766f" strokeWidth=".8" />
      <path d="M765 408.500L811 406.500" stroke="#5f669c" strokeWidth=".8" />
      <path d="M779 406.500h3v3h-3z" stroke="#fff" strokeWidth=".8" fill={colors.canvas} />
    </Ucs>

    <CubeArea>
      <svg width="64" height="70" viewBox="1198 110 64 70">
        <ellipse cx="1228" cy="145" rx="23" ry="28" fill="none" stroke="#484d59" strokeWidth="6" />
        <path d="M1225 131.500l13.500-4-3 30-15-4.500z" fill="#b9b9bb" />
        <path d="M1238.500 127.500l18.500 4.500-4 27-17.500-1.500z" fill="#cfcfd0" />
        <path d="M1238.500 128l-3 29" stroke="#8c8c90" strokeDasharray="3 2" strokeWidth=".7" />
        <g fontFamily="Open Sans" fontWeight="700" fill="#b9bbc0">
          <text x="1232" y="122" fontSize="9">N</text>
          <text x="1200" y="139" fontSize="10">W</text>
          <text x="1220" y="177" fontSize="10">S</text>
        </g>
        <g fontFamily="Open Sans" fontWeight="700" fill="#55565c">
          <text x="1241" y="145" fontSize="5" transform="rotate(8 1246 143)">TOP</text>
          <text x="1223" y="143" fontSize="5" transform="rotate(-82 1229 141)">LEFT</text>
        </g>
      </svg>
      <Wcs>WCS</Wcs>
    </CubeArea>

    <CommandArea>
      <History>
        <span>Invalid window specification.</span>
        <span>Command: Specify opposite corner or [Fence/WPolygon/CPolygon]: nnnn*Cancel*</span>
        <span>nnnn</span>
      </History>
      <CommandRow>
        <Slot $w={6} as="span"><Icon name="grip" size={8} /></Slot>
        <Slot aria-label="Close command line"><Icon name="close" /></Slot>
        <Slot aria-label="Customize command line"><Icon name="wrench" size={8} /></Slot>
        <CommandBox>
          <Icon name="prompt" size={8} />
          <Caret $color="#50555b" />
          <input placeholder="Type a command" aria-label="Command" />
          <Caret $color="#50555b" />
        </CommandBox>
      </CommandRow>
    </CommandArea>

    <Balloon>
      <BalloonHead>
        <svg width="9" height="9" viewBox="0 0 9 9">
          <circle cx="4.500" cy="4.500" r="4.200" fill="#1f7ac4" />
          <path d="M4.500 2v1.200M4.500 4v3" stroke="#fff" strokeWidth="1.300" />
        </svg>
        <b>Plot and Publish Job Complete</b>
        <BalloonClose aria-label="Dismiss">
          <svg viewBox="0 0 7 7"><path d="M1.500 1.500l4 4M5.500 1.500l-4 4" stroke="#333" /></svg>
        </BalloonClose>
      </BalloonHead>
      <BalloonText>No errors or warnings found</BalloonText>
      <BalloonLink href="#">Click to view plot and publish details...</BalloonLink>
      <svg className="tail" width="10" height="8"><path d="M0 0h9v8z" fill="#ffffe1" /></svg>
    </Balloon>
  </Canvas>
);

/* ---------- status bar ---------- */

const StatusBar = styled.footer`
  display: flex;
  align-items: center;
  justify-content: space-between;
  height: 15px;
  padding-bottom: 1px;
  box-shadow: inset 0 1px #39404b;
  background: #242b36;
`;

const StatusTools = styled.div`
  display: flex;
  align-items: center;
`;

const ModelButton = styled.button`
  width: 26px;
  color: #fff;
`;

const status = [
  ["grid", 12], ["snap", 12], ["", 8], ["ortho", 12, true], ["polar", 12], ["", 8],
  ["iso", 12], ["", 8], ["track", 12, true], ["osnap", 14, true], ["", 8],
  ["annoOn", 12, true], ["annoAuto", 12], ["annoScale", 12], ["1:1", 10], ["", 8],
  ["gear", 12], ["", 8], ["plus", 14], ["isolate", 14], ["plotter", 14],
  ["perf", 14], ["hardware", 14], ["clean", 14], ["menu", 14]
];

const Status = () => (
  <StatusBar>
    <TabRow $h={14}>
      <Slot $w={23} aria-label="Layout menu"><Icon name="menu" /></Slot>
      {["Model", "Layout1", "Layout2"].map((l, i) => (
        <DocTab key={l} $active={i === 0} $pad={5}>{l}</DocTab>
      ))}
      <DocTab aria-label="New layout" $pad={8}><Icon name="plus" size={8} /></DocTab>
    </TabRow>
    <StatusTools>
      <ModelButton>MODEL</ModelButton>
      {status.map(([name, w, active], i) => (
        <Slot key={i} $w={w} $active={active} aria-label={name || "options"}>
          {small[name] ? <Icon name={name} /> : name || <Caret />}
        </Slot>
      ))}
    </StatusTools>
  </StatusBar>
);

/* ---------- taskbar ---------- */

const Taskbar = styled.footer`
  display: grid;
  grid-template-columns: 1fr auto 1fr;
  align-items: center;
  height: 24px;
  box-shadow: inset 0 1px #2c3336;
  background: #1a1b1b;
  color: #f0f0f0;
`;

const Weather = styled.button`
  display: flex;
  gap: 3px;
  padding-left: 8px;
  text-align: left;
  span { display: block; color: #c6c6c6; }
`;

const Apps = styled.div`
  display: flex;
  align-items: center;
  padding-left: 5px;
`;

const SearchPill = styled.label`
  display: flex;
  align-items: center;
  gap: 5px;
  width: 110px;
  height: 16px;
  margin: 0 1px 0 6px;
  padding: 0 3px 0 5px;
  border-radius: 8px;
  background: #363737;
  input {
    flex: 1;
    min-width: 0;
    font-size: 7px;
    outline: none;
  }
  input::placeholder { color: #e2e2e2; opacity: 1; }
`;

const AppIcon = styled.button`
  position: relative;
  display: flex;
  align-items: center;
  justify-content: center;
  width: 22px;
  height: 22px;
  border-radius: 3px;
  background: ${p => (p.$active ? "#2d2e2e" : "none")};
  &::after {
    content: "";
    position: absolute;
    bottom: 1px;
    width: ${p => (p.$active ? 8 : 3)}px;
    height: 1px;
    background: ${p => (p.$active ? "#ef6d62" : p.$open ? "#a5a5a5" : "none")};
  }
`;

const Badge = styled.b`
  position: absolute;
  top: 2px;
  right: 1px;
  min-width: 8px;
  height: 8px;
  border-radius: 4px;
  background: ${p => p.$color};
  color: #fff;
  font-size: 5px;
  line-height: 8px;
  text-align: center;
`;

const Tray = styled.div`
  display: flex;
  align-items: center;
  justify-content: flex-end;
  padding-right: 9px;
`;

const Mic = styled.button`
  display: flex;
  align-items: center;
  justify-content: center;
  width: 16px;
  height: 20px;
  margin-right: 2px;
  border-radius: 2px;
  background: #ee7766;
`;

const Clock = styled.time`
  margin-left: 5px;
  text-align: right;
  span { display: block; }
`;

const apps = [
  {
    name: "Task View",
    art: (
      <>
        <path d="M1 4h9v7H1z" fill="#7b7b7b" />
        <path d="M4 1.500h8.500V9H4z" fill="#e8e8e8" />
      </>
    )
  },
  {
    name: "Copilot",
    art: (
      <>
        <path d="M2 8c0-4 1-7 4-7h2L6 8z" fill="#2c9be0" />
        <path d="M7 1c3 0 3 2 4 4H7z" fill="#58c481" />
        <path d="M12 5c1 4-1 7-4 7H6l2-7z" fill="#c454c9" />
        <path d="M1 6h5l-1 5C2 11 1 9 1 6z" fill="#e7b23a" />
        <path d="M5 10v2.500M7.500 10v2.500M10 10v2.500" stroke="#fff" />
      </>
    )
  },
  {
    name: "Explorer",
    open: true,
    art: (
      <>
        <path d="M0 1h4.500L6 2.500h7V11H0z" fill="#e9b63c" />
        <path d="M0 4.500h13v5H0z" fill="#f8d768" />
        <path d="M3 8h7v4H3z" fill="#3b86c9" />
      </>
    )
  },
  {
    name: "Edge",
    open: true,
    art: (
      <>
        <circle cx="6.500" cy="6.500" r="6.300" fill="#1b75c9" />
        <path d="M.5 6A6 6 0 0 1 12.700 6c.3 3-4 3.500-4.500 2 1-2-.5-3.500-2.500-3.500S1.500 5 .5 6z" fill="#48cf9b" />
        <path d="M5 6c-1 3 1 5.500 5 5.500-5 3-9 0-9-5C2 5 4 4.500 5 6z" fill="#2c9be6" />
      </>
    )
  },
  {
    name: "Store",
    art: (
      <>
        <path d="M4 3V1h5v2" fill="none" stroke="#6bbbe8" strokeWidth="1.200" />
        <path d="M.5 3h12v9H.5z" fill="#ececec" />
        <path d="M4 5h2.200v2.200H4z" fill="#dd5b47" />
        <path d="M6.800 5H9v2.200H6.800z" fill="#6eae49" />
        <path d="M4 7.800h2.200V10H4z" fill="#419fd9" />
        <path d="M6.800 7.800H9V10H6.800z" fill="#e5b540" />
      </>
    )
  },
  {
    name: "Opera",
    open: true,
    art: (
      <>
        <circle cx="6.500" cy="6.500" r="5.800" fill="none" stroke="#b51f3b" />
        <ellipse cx="6.500" cy="6.500" rx="2.700" ry="4.700" fill="none" stroke="#b51f3b" />
      </>
    )
  },
  {
    name: "WhatsApp",
    open: true,
    badge: ["21", "#e56a55"],
    art: (
      <>
        <path d="M.8 12.200l1-3.400A5.600 5.600 0 1 1 4.300 11.300z" fill="#1d3326" stroke="#3ccf66" strokeWidth="1.300" />
        <path d="M4.500 4c0 3 2 5 4.500 5" fill="none" stroke="#3ccf66" strokeWidth="1.700" />
      </>
    )
  },
  {
    name: "OBS",
    open: true,
    badge: ["", "#e02a2a"],
    art: (
      <>
        <circle cx="6.500" cy="6.500" r="5.800" fill="#181818" stroke="#cfcfcf" />
        <path d="M6.500 6.500C4 6 3.500 4 5 2.500M6.500 6.500C8 4.500 10 5 11 7M6.500 6.500C7 9 5 10.500 3 9.500" fill="none" stroke="#cfcfcf" strokeWidth="1.200" />
      </>
    )
  },
  {
    name: "AutoCAD",
    active: true,
    badge: ["1", "#3f9bdc"],
    art: (
      <>
        <path d="M1 1h11v11H1z" fill="#d3123f" />
        <path d="M3.500 8L6 2.500 8.500 8M4.500 6.300h3M4 10.500h4.500" fill="none" stroke="#fff" strokeWidth="1.200" />
      </>
    )
  },
  {
    name: "Web app",
    open: true,
    art: (
      <>
        <path d="M.5 .5h12v12H.5z" fill="#e9eef2" />
        <circle cx="6.500" cy="6.500" r="4.300" fill="#3d7fae" />
        <path d="M2.500 5h8M2.500 8h8M6.500 2v9M4.500 3v7M8.500 3v7" stroke="#dce8f0" strokeWidth=".5" />
      </>
    )
  }
];

const Windows = () => (
  <Taskbar>
    <Weather>
      <svg width="14" height="16" viewBox="0 0 14 16">
        <path d="M2 9c1-5 9-5 10 0z" fill="#7ab3e0" />
        <path d="M7 8v5q-1 2-2 0" fill="none" stroke="#9cc6e6" />
        <circle cx="11" cy="4" r="3.800" fill="#f07b9a" />
        <path d="M10 3.200l1-.8v4" fill="none" stroke="#33202a" strokeWidth=".9" />
      </svg>
      <div>
        4 mm yağmur
        <span>Cumartesi</span>
      </div>
    </Weather>
    <Apps>
      <Slot $w={14} $h={14} aria-label="Start menu">
        <svg width="12" height="12" viewBox="0 0 12 12">
          <path d="M0 0h5.700v5.700H0zM6.300 0H12v5.700H6.300zM0 6.300h5.700V12H0zM6.300 6.300H12V12H6.300z" fill="#4cc2f1" />
        </svg>
      </Slot>
      <SearchPill>
        <Icon name="search" size={8} />
        <input placeholder="Ara" aria-label="Ara" />
        <svg width="22" height="13" viewBox="0 0 22 13">
          <path d="M4 6C6 1 14 0 17 4c2 2 3 5 4.500 7l-2 1.500-2.500-3-3 .5-1 2-2-2C8 9 5 9 4 6z" fill="#a9adb5" />
          <path d="M1 12V8l1.500-3L4 9v3z" fill="#b9c33e" />
        </svg>
      </SearchPill>
      {apps.map(a => (
        <AppIcon key={a.name} aria-label={a.name} $open={a.open} $active={a.active}>
          <svg width="13" height="13" viewBox="0 0 13 13">{a.art}</svg>
          {a.badge && <Badge $color={a.badge[1]}>{a.badge[0]}</Badge>}
        </AppIcon>
      ))}
    </Apps>
    <Tray>
      <Slot aria-label="Hidden icons">
        <svg width="6" height="4"><path d="M.5 3.500L3 1l2.500 2.500" fill="none" stroke="#eee" /></svg>
      </Slot>
      <Slot $w={18} aria-label="Cloud">
        <svg width="10" height="8" viewBox="0 0 10 8">
          <path d="M2 7a2 2 0 0 1 0-4c1-3 5-3 6 0v4z" fill="#b9bdc4" />
          <circle cx="7" cy="5.500" r="2.300" fill="#d3123f" />
        </svg>
      </Slot>
      <Mic aria-label="Microphone">
        <svg width="8" height="10" viewBox="0 0 8 10">
          <path d="M3 1h2v5H3z" fill="#2b1715" />
          <path d="M1.500 4.500c0 4 5 4 5 0M4 7.500V9.500" fill="none" stroke="#2b1715" />
        </svg>
      </Mic>
      <Slot aria-label="Display">
        <svg width="9" height="9" viewBox="0 0 9 9">
          <path d="M5 1H1v5.500h7V5M3 8.500h3" fill="none" stroke="#eee" />
          <path d="M6 1h2.500v3H6z" fill="#eee" />
        </svg>
      </Slot>
      <Slot aria-label="Volume">
        <svg width="10" height="8" viewBox="0 0 10 8">
          <path d="M.5 3h1.500l2-2v6l-2-2H.5z" fill="none" stroke="#eee" strokeWidth=".8" />
          <path d="M5.500 2.500q1 1.500 0 3M7 1.500q1.800 2.500 0 5M8.500.8q2 3.200 0 6.400" fill="none" stroke="#ccc" strokeWidth=".7" />
        </svg>
      </Slot>
      <Clock>
        <span>00:34</span>
        <span>25.05.2026</span>
      </Clock>
    </Tray>
  </Taskbar>
);

const App = () => (
  <Page>
    <GlobalStyle />
    <TopBar />
    <Ribbon />
    <DocTabs />
    <Main>
      <Recovery />
      <Drawing />
    </Main>
    <Status />
    <Windows />
  </Page>
);

export default App;
